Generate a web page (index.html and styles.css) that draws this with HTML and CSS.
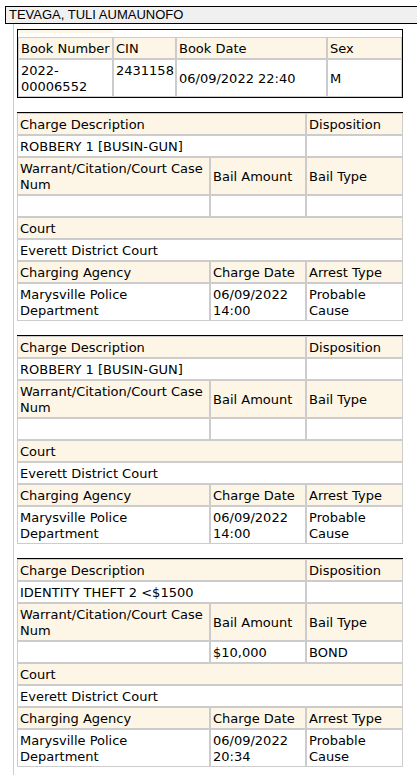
FILE: index.html
```html
<!DOCTYPE html>
<html lang="en">
<head>
    <meta charset="UTF-8">
    <meta name="viewport" content="width=device-width, initial-scale=1.0">
    <title>Inmate Detail</title>
    <link rel="stylesheet" href="styles.css">
</head>
<body>
    <div class="name-bar">TEVAGA, TULI AUMAUNOFO</div>

    <div class="content">
        <table class="book">
            <colgroup>
                <col class="c-book">
                <col class="c-cin">
                <col class="c-date">
                <col class="c-sex">
            </colgroup>
            <tr>
                <td class="strip"></td>
                <td class="blank"></td>
                <td class="blank"></td>
                <td class="blank"></td>
            </tr>
            <tr>
                <th>Book Number</th>
                <th>CIN</th>
                <th>Book Date</th>
                <th>Sex</th>
            </tr>
            <tr>
                <td>2022-<br>00006552</td>
                <td class="top">2431158</td>
                <td>06/09/2022 22:40</td>
                <td>M</td>
            </tr>
        </table>

        <table class="charge">
            <colgroup><col class="c-1"><col class="c-2"><col class="c-3"></colgroup>
            <tr><th colspan="2">Charge Description</th><th>Disposition</th></tr>
            <tr><td colspan="2">ROBBERY 1 [BUSIN-GUN]</td><td>&nbsp;</td></tr>
            <tr><th>Warrant/Citation/Court Case Num</th><th>Bail Amount</th><th>Bail Type</th></tr>
            <tr><td>&nbsp;</td><td>&nbsp;</td><td>&nbsp;</td></tr>
            <tr><th colspan="3">Court</th></tr>
            <tr><td colspan="3">Everett District Court</td></tr>
            <tr><th>Charging Agency</th><th>Charge Date</th><th>Arrest Type</th></tr>
            <tr><td>Marysville Police Department</td><td>06/09/2022 14:00</td><td>Probable Cause</td></tr>
        </table>

        <table class="charge">
            <colgroup><col class="c-1"><col class="c-2"><col class="c-3"></colgroup>
            <tr><th colspan="2">Charge Description</th><th>Disposition</th></tr>
            <tr><td colspan="2">ROBBERY 1 [BUSIN-GUN]</td><td>&nbsp;</td></tr>
            <tr><th>Warrant/Citation/Court Case Num</th><th>Bail Amount</th><th>Bail Type</th></tr>
            <tr><td>&nbsp;</td><td>&nbsp;</td><td>&nbsp;</td></tr>
            <tr><th colspan="3">Court</th></tr>
            <tr><td colspan="3">Everett District Court</td></tr>
            <tr><th>Charging Agency</th><th>Charge Date</th><th>Arrest Type</th></tr>
            <tr><td>Marysville Police Department</td><td>06/09/2022 14:00</td><td>Probable Cause</td></tr>
        </table>

        <table class="charge">
            <colgroup><col class="c-1"><col class="c-2"><col class="c-3"></colgroup>
            <tr><th colspan="2">Charge Description</th><th>Disposition</th></tr>
            <tr><td colspan="2">IDENTITY THEFT 2 &lt;$1500</td><td>&nbsp;</td></tr>
            <tr><th>Warrant/Citation/Court Case Num</th><th>Bail Amount</th><th>Bail Type</th></tr>
            <tr><td>&nbsp;</td><td>$10,000</td><td>BOND</td></tr>
            <tr><th colspan="3">Court</th></tr>
            <tr><td colspan="3">Everett District Court</td></tr>
            <tr><th>Charging Agency</th><th>Charge Date</th><th>Arrest Type</th></tr>
            <tr><td>Marysville Police Department</td><td>06/09/2022 20:34</td><td>Probable Cause</td></tr>
        </table>
    </div>
</body>
</html>
```

FILE: styles.css
```css
html, body {
    overflow-x: hidden;
}
body {
    margin: 6px 0 0 5px;
    background: #ffffff;
    color: #000000;
}
.name-bar {
    font-family: "Liberation Sans", Arial, sans-serif;
    font-size: 13px;
    line-height: 16px;
    background: #f0f0f0;
    border: 1px solid #000000;
    padding-left: 3px;
    margin-right: -20px;
}
.content {
    margin-left: 8px;
    border-left: 1px solid #cccccc;
    padding: 5px 0 20px 3px;
    min-height: 760px;
}
table {
    font-family: "DejaVu Sans", Verdana, sans-serif;
    font-size: 13px;
    line-height: 16px;
    width: 386px;
    border-collapse: separate;
    border-spacing: 0;
    table-layout: fixed;
    margin-bottom: 14px;
}
th, td {
    font-weight: normal;
    text-align: left;
    padding: 3px 2px 1px;
    border: 1px solid #cccccc;
    vertical-align: middle;
}
th {
    background: #fdf5e6;
}
td {
    background: #ffffff;
}
td.top {
    vertical-align: top;
}
.book {
    border: 1px solid #000000;
}
.book td.strip {
    height: 3px;
    padding: 0;
    border: 0;
    border-bottom: 4px solid #ffffff;
    background: #fdf5e6;
}
.book td.blank {
    padding: 0;
    border: 0;
}
.c-book { width: 95px; }
.c-cin { width: 63px; }
.c-date { width: 151px; }
.c-sex { width: 75px; }
.charge {
    border-top: 1px solid #000000;
}
.c-1 { width: 193px; }
.c-2 { width: 96px; }
.c-3 { width: 97px; }
```
